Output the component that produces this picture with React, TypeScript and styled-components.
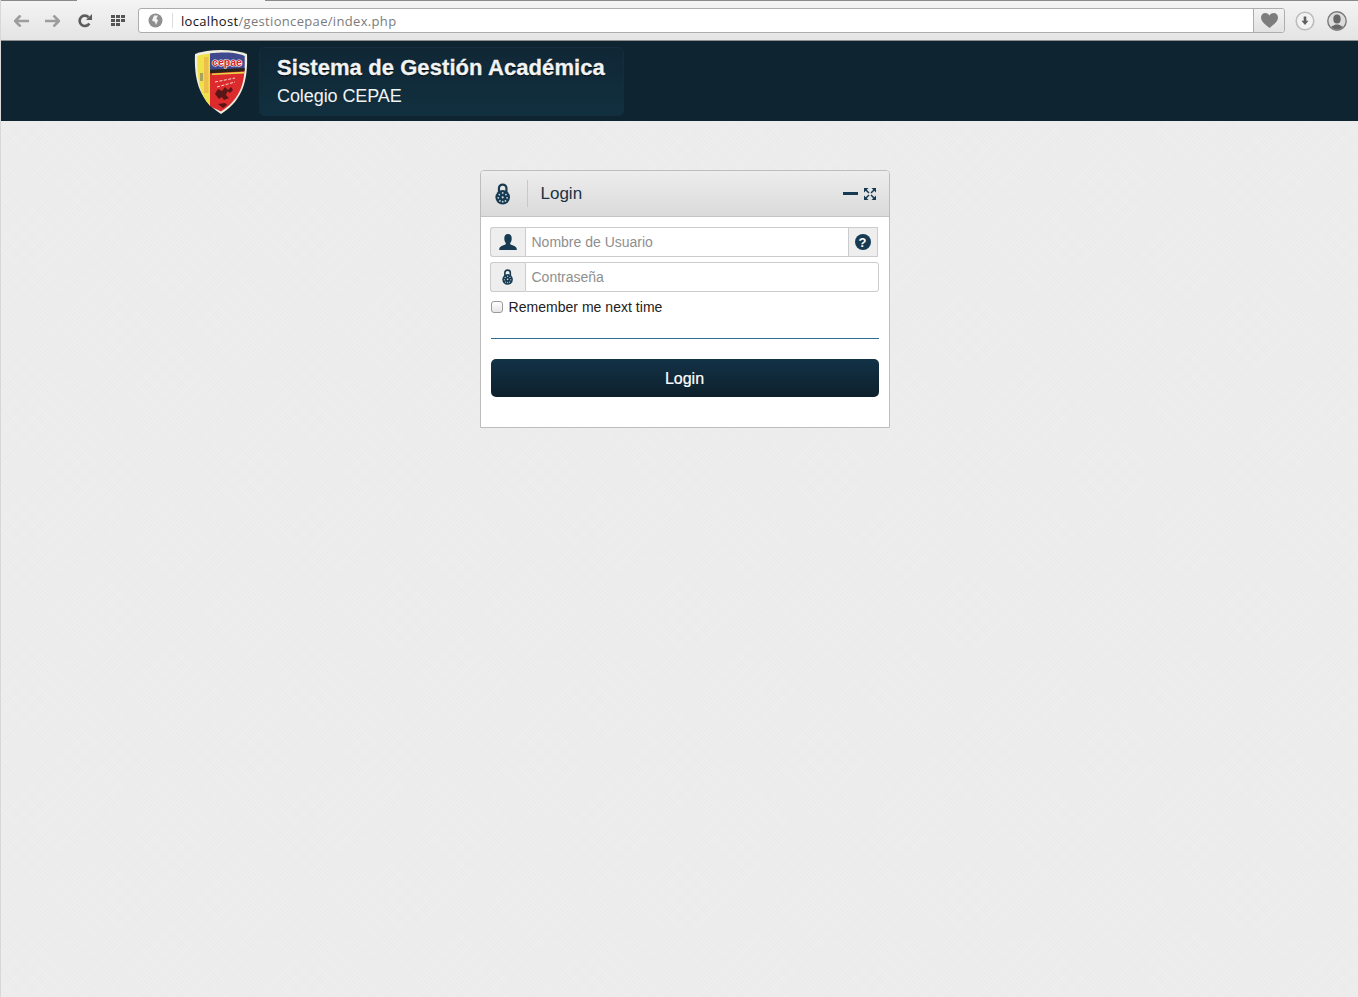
import React from 'react'
import styled, { createGlobalStyle } from 'styled-components'

const GlobalStyle = createGlobalStyle`
  html, body {
    margin: 0;
    height: 100%;
    background: #ebebeb;
    font-family: "Liberation Sans", Arial, sans-serif;
  }
  * { box-sizing: border-box; }
`

const LockIcon: React.FC<{ size: number }> = ({ size }) => (
  <svg width={size * 0.7} height={size} viewBox="0 0 14 20">
    <path d="M3.6 9V4.8a3.4 3.4 0 0 1 6.8 0V9" fill="none" stroke="#1a3a50" strokeWidth="2" />
    <circle cx="7" cy="13" r="6.6" fill="#163a52" />
    <g fill="#cfd8de">
      <circle cx="7" cy="9" r=".8" />
      <circle cx="10" cy="10.5" r=".8" />
      <circle cx="11" cy="13.5" r=".8" />
      <circle cx="9.5" cy="16.3" r=".8" />
      <circle cx="7" cy="17" r=".8" />
      <circle cx="4.5" cy="16.3" r=".8" />
      <circle cx="3" cy="13.5" r=".8" />
      <circle cx="4" cy="10.5" r=".8" />
      <circle cx="7" cy="13" r="1" />
    </g>
  </svg>
)

const UserIcon = () => (
  <svg width="18" height="16" viewBox="0 0 18 16">
    <path
      d="M9 0c2.600 0 3.700 1.800 3.700 4.400 0 2-.7 3.500-1.500 4.500v1.400c1.600 1 5.400 1.600 6.300 3.700.2.600.3 1.200.3 2H.2c0-.8.1-1.400.3-2 .9-2.100 4.700-2.700 6.300-3.700V8.900C6 7.900 5.300 6.400 5.300 4.400 5.300 1.800 6.400 0 9 0z"
      fill="#163a52"
    />
  </svg>
)

const ExpandIcon = () => (
  <svg width="12" height="12" viewBox="0 0 12 12">
    <g fill="#163a52">
      <path d="M0 0h4.500L0 4.500zM12 0v4.500L7.500 0zM0 12V7.500L4.500 12zM12 12H7.500L12 7.500z" />
    </g>
    <path d="M1.500 1.500L5 5M10.500 1.500L7 5M1.500 10.500L5 7M10.500 10.500L7 7" stroke="#163a52" strokeWidth="1.500" />
  </svg>
)

const SchoolCrest = () => (
  <Crest viewBox="0 0 54 66" width="54" height="66">
    <path d="M27 1C17 1 8 2.500 1 5c-.8 22 2 45 26 60C51 50 53.800 27 53 5 46 2.500 37 1 27 1z" fill="#f1eee0" />
    <path d="M16 4.600C11 5 7 5.800 3.300 7c-.5 19 1.500 38 12.700 50z" fill="#f0e04a" />
    <path d="M10 8h4.500v36H10z" fill="#e9b04e" opacity=".7" />
    <path d="M6 24h3v8H6z" fill="#a8a35a" />
    <path d="M16 4.500C20 3.500 34 3.200 38 3.800c4 .4 9 1.600 12.700 3.200.100 5 .100 9.500-.100 14L16 23z" fill="#3f4a8e" />
    <path d="M16 23l34.500-2c-.8 15-5.400 30-23.500 41.500-4-2-8-3.500-11-5.500z" fill="#dc2b2c" />
    <path d="M16 20.800l34.600-1.800v3.300L16 24.200z" fill="#2a2218" />
    <path d="M18 24.500l32-1.700v1.600l-32 1.700z" fill="#e8d54a" />
    <CrestWord x="33" y="16.500" textAnchor="middle">
      cepae
    </CrestWord>
    <path d="M21 33l20-4M23 38l18-5" stroke="#f7d7d7" strokeWidth="1" strokeDasharray="3 1.500" />
    <path
      d="M21 45l3-5 4 2 3-4 3 3-2 5 3 3-5 2-2-3-3 2zM24 55l7-1 2 2-4 3zM33 42l4-4 2 3-3 3z"
      fill="#5a1517"
    />
  </Crest>
)

const App: React.FC = () => {
  return (
    <Page>
      <GlobalStyle />
      <Browser>
        <TabEdge $left={0} $width={77} />
        <TabEdge $left={265} $width={1093} />
        <NavButton $width={28}>
          <svg width="16" height="12" viewBox="0 0 16 12">
            <path d="M6.500 0.500L1 6l5.500 5.500M1.500 6H15" fill="none" stroke="#9d9d9d" strokeWidth="2.600" />
          </svg>
        </NavButton>
        <NavButton $width={32}>
          <svg width="16" height="12" viewBox="0 0 16 12">
            <path d="M9.500 0.500L15 6l-5.500 5.500M14.500 6H1" fill="none" stroke="#9d9d9d" strokeWidth="2.600" />
          </svg>
        </NavButton>
        <NavButton $width={34}>
          <svg width="14" height="14" viewBox="0 0 14 14">
            <path d="M11.300 9.500A5.200 5.200 0 1 1 10.600 3.200" fill="none" stroke="#5c5c5c" strokeWidth="2.700" />
            <path d="M8 6h6V0z" fill="#5c5c5c" />
          </svg>
        </NavButton>
        <NavButton $width={32}>
          <svg width="14" height="11" viewBox="0 0 14 11" fill="#555">
            <path d="M0 0h4v3H0zM5 0h4v3H5zM10 0h4v3h-4zM0 4h4v3H0zM5 4h4v3H5zM10 4h4v3h-4zM0 8h4v3H0zM5 8h4v3H5z" />
          </svg>
        </NavButton>
        <Omnibox>
          <SiteIcon>
            <svg width="15" height="15" viewBox="0 0 15 15">
              <circle cx="7.500" cy="7.500" r="7" fill="#8f8f8f" />
              <path d="M6 2.500h4L8.500 5.500 10 7.500 8 12l-1-3-3-1.500L5 5z" fill="#f2f2f2" />
            </svg>
          </SiteIcon>
          <Url>
            localhost<UrlPath>/gestioncepae/index.php</UrlPath>
          </Url>
          <Bookmark>
            <svg width="17" height="15" viewBox="0 0 17 15">
              <path
                d="M8.500 15C5 12 0 8.800 0 4.500 0 1.800 2 0 4.300 0c1.800 0 3.300 1 4.200 2.500C9.400 1 10.900 0 12.700 0 15 0 17 1.800 17 4.500 17 8.800 12 12 8.500 15z"
                fill="#7d7d7d"
              />
            </svg>
          </Bookmark>
        </Omnibox>
        <ToolButtons>
          <svg width="20" height="20" viewBox="0 0 20 20">
            <circle cx="10" cy="10" r="8.800" fill="#f2f2f2" stroke="#bcbcbc" strokeWidth="1.600" />
            <path d="M8.700 5.500h2.600v4.300h2.200L10 14 6.500 9.800h2.200z" fill="#5f5f5f" />
          </svg>
          <svg width="20" height="20" viewBox="0 0 20 20">
            <defs>
              <clipPath id="avatarClip">
                <circle cx="10" cy="10" r="8.500" />
              </clipPath>
            </defs>
            <circle cx="10" cy="10" r="9.200" fill="#dcdcdc" stroke="#7a7a7a" strokeWidth="1.400" />
            <g clipPath="url(#avatarClip)" fill="#666">
              <ellipse cx="10" cy="8" rx="3.700" ry="4.500" />
              <path d="M2 20c0-4.500 4-5 6.500-6.500h3C14 15 18 15.500 18 20z" />
            </g>
          </svg>
        </ToolButtons>
      </Browser>

      <Banner>
        <SchoolCrest />
        <TitleBox>
          <Title>Sistema de Gestión Académica</Title>
          <Subtitle>Colegio CEPAE</Subtitle>
        </TitleBox>
      </Banner>

      <Content>
        <Card>
          <CardHeader>
            <HeaderIcon>
              <LockIcon size={22} />
            </HeaderIcon>
            <CardTitle>Login</CardTitle>
            <CardTools>
              <Minimize />
              <ExpandIcon />
            </CardTools>
          </CardHeader>
          <CardBody>
            <Field>
              <Addon>
                <UserIcon />
              </Addon>
              <TextInput type="text" placeholder="Nombre de Usuario" $hasAfter />
              <HelpAddon>
                <HelpBadge>?</HelpBadge>
              </HelpAddon>
            </Field>
            <Field>
              <Addon>
                <LockIcon size={16} />
              </Addon>
              <TextInput type="password" placeholder="Contraseña" />
            </Field>
            <Remember>
              <Check type="checkbox" />
              Remember me next time
            </Remember>
            <Rule />
            <LoginButton type="button">Login</LoginButton>
          </CardBody>
        </Card>
      </Content>
    </Page>
  )
}

export default App

const Page = styled.div`
  display: flex;
  flex-direction: column;
  height: 997px;
  overflow: hidden;
  background-color: #ebebeb;
  background-image:
    repeating-linear-gradient(45deg, rgba(255, 255, 255, 0.1) 0 1px, transparent 1px 3px),
    repeating-linear-gradient(-45deg, rgba(255, 255, 255, 0.1) 0 1px, transparent 1px 3px);
  border-left: 1px solid #d8d8d8;
`
const Browser = styled.div`
  position: relative;
  display: flex;
  align-items: center;
  flex: 0 0 41px;
  margin-left: -1px;
  padding: 1px 0 0 8px;
  background: linear-gradient(#f4f4f4, #e4e4e4);
  border-bottom: 1px solid #8e8e8e;
`
const TabEdge = styled.div<{ $left: number; $width: number }>`
  position: absolute;
  top: 0;
  left: ${p => p.$left}px;
  width: ${p => p.$width}px;
  height: 1px;
  background: #8a8a8a;
`
const NavButton = styled.div<{ $width: number }>`
  display: flex;
  align-items: center;
  justify-content: center;
  width: ${p => p.$width}px;
  height: 24px;
`
const Omnibox = styled.div`
  display: flex;
  align-items: center;
  width: 1147px;
  height: 25px;
  margin-left: 4px;
  background: #fff;
  border: 1px solid #adadad;
  border-radius: 3px;
`
const SiteIcon = styled.div`
  display: flex;
  align-items: center;
  justify-content: center;
  width: 34px;
  height: 15px;
  border-right: 1px solid #dcdcdc;
`
const Url = styled.div`
  flex: 1;
  padding-left: 8px;
  font-family: "Open Sans", sans-serif;
  font-size: 13px;
  letter-spacing: 0.33px;
  color: #111;
`
const UrlPath = styled.span`
  color: #7b7b7b;
`
const Bookmark = styled.div`
  display: flex;
  align-items: center;
  justify-content: center;
  width: 31px;
  height: 100%;
  background: linear-gradient(#f2f2f2, #e2e2e2);
  border-left: 1px solid #adadad;
  border-radius: 0 3px 3px 0;
`
const ToolButtons = styled.div`
  display: flex;
  align-items: center;
  gap: 12px;
  margin-left: 10px;
`
const Banner = styled.header`
  display: flex;
  align-items: center;
  flex: 0 0 80px;
  padding-left: 193px;
  background: #0f2431;
`
const Crest = styled.svg`
  margin-right: 11px;
  margin-top: 1px;
`
const CrestWord = styled.text`
  font-family: "Liberation Sans", sans-serif;
  font-size: 10.500px;
  font-weight: 700;
  fill: #d8262e;
  stroke: #ffffff;
  stroke-width: 1.200px;
  paint-order: stroke;
`
const TitleBox = styled.div`
  display: flex;
  flex-direction: column;
  justify-content: center;
  width: 365px;
  height: 69px;
  padding: 0 17px 2px;
  background: linear-gradient(#102635, #11303f);
  border: 1px solid #142c3b;
  border-radius: 5px;
`
const Title = styled.h1`
  margin: 0 0 3px;
  font-size: 22px;
  line-height: 28px;
  font-weight: 700;
  letter-spacing: 0.08px;
  color: #f1f3f4;
  -webkit-text-stroke: 0.3px #f1f3f4;
  text-shadow: 0 1px 1px #000;
  white-space: nowrap;
`
const Subtitle = styled.div`
  font-size: 18px;
  line-height: 22px;
  letter-spacing: -0.08px;
  color: #f1f3f4;
`
const Content = styled.main`
  display: flex;
  justify-content: center;
  flex: 1;
  padding: 49px 0 0 10px;
`
const Card = styled.section`
  width: 410px;
  height: 258px;
  background: #fff;
  border: 1px solid #bdbdbd;
  border-radius: 4px 4px 0 0;
`
const CardHeader = styled.div`
  display: flex;
  align-items: center;
  height: 46px;
  background: linear-gradient(#ededed, #dadada);
  border-bottom: 1px solid #c4c4c4;
  border-radius: 3px 3px 0 0;
`
const HeaderIcon = styled.div`
  display: flex;
  align-items: center;
  justify-content: center;
  width: 47px;
  height: 27px;
  padding-right: 2px;
  border-right: 1px solid #c9c9c9;
`
const CardTitle = styled.h2`
  flex: 1;
  margin: 0 0 0 13px;
  font-size: 17px;
  font-weight: 400;
  color: #1a3243;
`
const CardTools = styled.div`
  display: flex;
  align-items: center;
  gap: 6px;
  padding-right: 13px;
`
const Minimize = styled.div`
  width: 15px;
  height: 3px;
  background: #163a52;
`
const CardBody = styled.div`
  display: flex;
  flex-direction: column;
  padding: 10px 10px 0;
`
const Field = styled.div`
  display: flex;
  height: 30px;
  margin: 0 0 5px -1px;
`
const Addon = styled.div`
  display: flex;
  align-items: center;
  justify-content: center;
  flex: 0 0 35px;
  background: #eeeeee;
  border: 1px solid #cccccc;
  border-right: 0;
  border-radius: 3px 0 0 3px;
`
const TextInput = styled.input<{ $hasAfter?: boolean }>`
  flex: 1;
  min-width: 0;
  padding: 0 6px;
  font-family: "Liberation Sans", Arial, sans-serif;
  font-size: 14px;
  background: #fff;
  border: 1px solid #cccccc;
  border-radius: ${p => (p.$hasAfter ? '0' : '0 3px 3px 0')};
  outline: none;

  &::placeholder {
    color: #8f8f8f;
    opacity: 1;
  }
`
const HelpAddon = styled.div`
  display: flex;
  align-items: center;
  justify-content: center;
  flex: 0 0 29px;
  margin-right: 1px;
  background: #eeeeee;
  border: 1px solid #cccccc;
  border-left: 0;
`
const HelpBadge = styled.span`
  display: flex;
  align-items: center;
  justify-content: center;
  width: 16px;
  height: 16px;
  font-size: 13px;
  font-weight: 700;
  color: #fff;
  background: #163a52;
  border-radius: 50%;
`
const Remember = styled.label`
  display: flex;
  align-items: center;
  height: 20px;
  font-size: 14px;
  letter-spacing: 0.03px;
  color: #222;
`
const Check = styled.input`
  appearance: none;
  width: 12px;
  height: 12px;
  margin: 0 6px 0 0;
  background: linear-gradient(#ffffff, #e6e6e6);
  border: 1px solid #9a9a9a;
  border-radius: 3px;
`
const Rule = styled.hr`
  width: 100%;
  height: 1px;
  margin: 21px 0 20px;
  background: #2f6f8f;
  border: 0;
`
const LoginButton = styled.button`
  height: 38px;
  padding: 2px 0 0;
  font-family: "Liberation Sans", Arial, sans-serif;
  font-size: 16px;
  color: #fff;
  -webkit-text-stroke: 0.2px #ffffff;
  background: linear-gradient(#123246, #0e202c);
  border: 0;
  border-radius: 5px;
`
